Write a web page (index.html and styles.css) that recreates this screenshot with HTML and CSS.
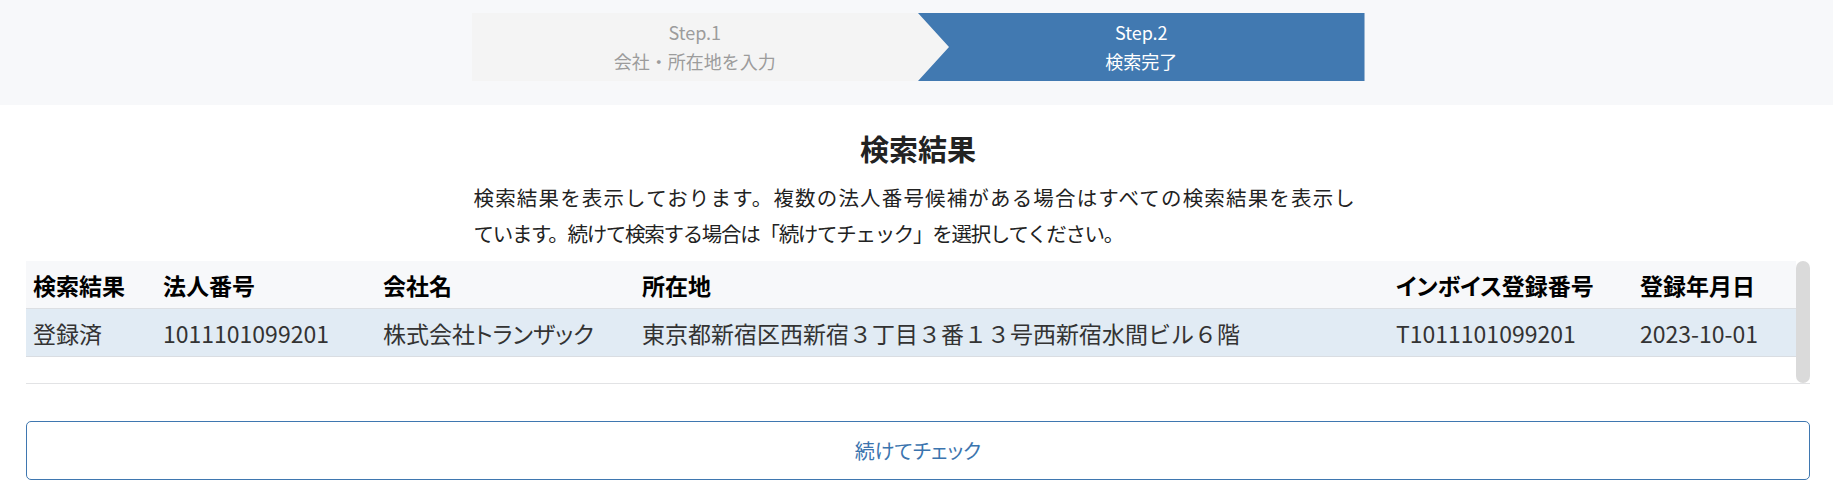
FILE: index.html
```html
<!DOCTYPE html>
<html lang="ja">
<head>
<meta charset="utf-8">
<title>検索結果</title>
<link rel="stylesheet" href="styles.css">
</head>
<body>
<header class="stepbar">
  <ol class="steps">
    <li class="step step-done"><span class="step-no">Step.1</span><span class="step-name">会社・所在地を入力</span></li>
    <li class="step step-current"><span class="step-no">Step.2</span><span class="step-name">検索完了</span></li>
  </ol>
</header>
<main class="content">
  <h1 class="title">検索結果</h1>
  <p class="lead"><span class="lead-first">検索結果を表示しております。複数の法人番号候補がある場合はすべての検索結果を表示し</span>ています。続けて検索する場合は「続けてチェック」を選択してください。</p>
  <div class="results">
    <div class="results-body">
      <table class="result-table">
        <thead>
          <tr>
            <th class="col-status">検索結果</th>
            <th class="col-corp">法人番号</th>
            <th class="col-name">会社名</th>
            <th class="col-addr">所在地</th>
            <th class="col-invoice prop">インボイス登録番号</th>
            <th class="col-date">登録年月日</th>
          </tr>
        </thead>
        <tbody>
          <tr>
            <td>登録済</td>
            <td>1011101099201</td>
            <td class="prop">株式会社トランザック</td>
            <td>東京都新宿区西新宿３丁目３番１３号西新宿水間ビル６階</td>
            <td>T1011101099201</td>
            <td>2023-10-01</td>
          </tr>
        </tbody>
      </table>
    </div>
    <div class="scrollbar"></div>
  </div>
  <button class="btn-continue" type="button">続けてチェック</button>
</main>
</body>
</html>
```

FILE: styles.css
```css
* { box-sizing: border-box; }
html, body { margin: 0; padding: 0; background: #fff; }
body {
  font-family: "Noto Sans CJK JP", "Noto Sans", sans-serif;
  color: #222;
}

.stepbar {
  background: #f7f8fa;
  padding: 13px 23px 24px 26px;
}
.steps {
  list-style: none;
  margin: 0 auto;
  padding: 0;
  width: 893px;
  height: 68px;
  display: flex;
  background: #f4f4f4;
}
.step {
  flex: 1 1 0;
  display: flex;
  flex-direction: column;
  align-items: center;
  justify-content: center;
  font-size: 18px;
  line-height: 29px;
}
.step-done { color: #9c9c9c; }
.step-current {
  color: #fff;
  background: #4179b1;
  clip-path: polygon(0 0, 100% 0, 100% 100%, 0 100%, 31px 50%);
}

.content {
  padding: 0 23px 40px 26px;
}
.title {
  margin: 21px 0 0;
  text-align: center;
  font-size: 29px;
  line-height: 44px;
  font-weight: 700;
  color: #222;
}
.lead {
  width: 893px;
  padding: 0 11px 0 2px;
  margin: 9px auto 10px;
  font-size: 20.5px;
  line-height: 36px;
  letter-spacing: -1.3px;
  color: #222;
}
.lead-first {
  display: block;
  text-align: justify;
  text-align-last: justify;
  white-space: nowrap;
}

.results {
  display: flex;
  height: 123px;
  border-bottom: 1px solid #e2e3e5;
}
.results-body {
  flex: 1 1 auto;
  min-width: 0;
}
.scrollbar {
  flex: 0 0 14px;
  width: 14px;
  background: #dadada;
  border-radius: 7px;
}
.result-table {
  width: 100%;
  border-collapse: collapse;
  table-layout: fixed;
  font-size: 23px;
}
.result-table th,
.result-table td {
  text-align: left;
  padding: 7px 7px 6px;
  line-height: 34px;
  white-space: nowrap;
}
.result-table th {
  background: #f7f8fa;
  color: #000;
  font-weight: 700;
  border-bottom: 1px solid #dcdfe3;
}
.result-table td {
  background: #e1ebf4;
  color: #333;
  border-bottom: 1px solid #d9dde2;
}
.result-table .prop { font-feature-settings: "palt"; }
.col-status { width: 130px; }
.col-corp { width: 220px; }
.col-name { width: 259px; }
.col-addr { width: 754px; }
.col-invoice { width: 244px; }
.col-date { width: 163px; }

.btn-continue {
  display: block;
  width: 100%;
  height: 59px;
  margin: 37px 0 0;
  background: #fff;
  border: 1px solid #3f77b0;
  border-radius: 5px;
  color: #3b74ae;
  font-family: inherit;
  font-size: 20px;
  line-height: 30px;
  font-feature-settings: "palt";
  cursor: pointer;
}
```
